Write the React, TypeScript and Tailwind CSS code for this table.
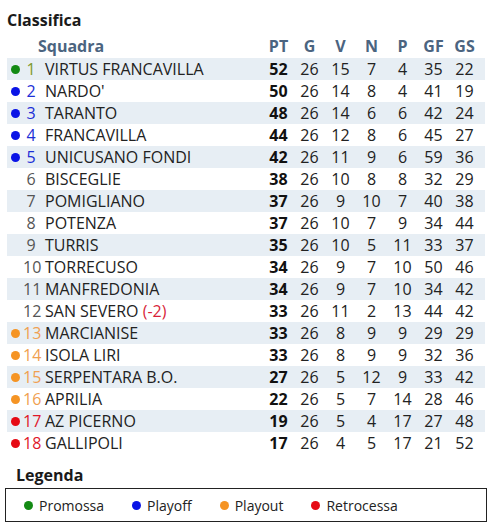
import React from "react";

type Row = {
  pos: number;
  name: string;
  pen?: string;
  zone?: "p" | "o" | "u" | "r";
  pt: number;
  g: number;
  v: number;
  n: number;
  p: number;
  gf: number;
  gs: number;
};

const rows: Row[] = [
  { pos: 1, name: "VIRTUS FRANCAVILLA", zone: "p", pt: 52, g: 26, v: 15, n: 7, p: 4, gf: 35, gs: 22 },
  { pos: 2, name: "NARDO'", zone: "o", pt: 50, g: 26, v: 14, n: 8, p: 4, gf: 41, gs: 19 },
  { pos: 3, name: "TARANTO", zone: "o", pt: 48, g: 26, v: 14, n: 6, p: 6, gf: 42, gs: 24 },
  { pos: 4, name: "FRANCAVILLA", zone: "o", pt: 44, g: 26, v: 12, n: 8, p: 6, gf: 45, gs: 27 },
  { pos: 5, name: "UNICUSANO FONDI", zone: "o", pt: 42, g: 26, v: 11, n: 9, p: 6, gf: 59, gs: 36 },
  { pos: 6, name: "BISCEGLIE", pt: 38, g: 26, v: 10, n: 8, p: 8, gf: 32, gs: 29 },
  { pos: 7, name: "POMIGLIANO", pt: 37, g: 26, v: 9, n: 10, p: 7, gf: 40, gs: 38 },
  { pos: 8, name: "POTENZA", pt: 37, g: 26, v: 10, n: 7, p: 9, gf: 34, gs: 44 },
  { pos: 9, name: "TURRIS", pt: 35, g: 26, v: 10, n: 5, p: 11, gf: 33, gs: 37 },
  { pos: 10, name: "TORRECUSO", pt: 34, g: 26, v: 9, n: 7, p: 10, gf: 50, gs: 46 },
  { pos: 11, name: "MANFREDONIA", pt: 34, g: 26, v: 9, n: 7, p: 10, gf: 34, gs: 42 },
  { pos: 12, name: "SAN SEVERO", pen: "(-2)", pt: 33, g: 26, v: 11, n: 2, p: 13, gf: 44, gs: 42 },
  { pos: 13, name: "MARCIANISE", zone: "u", pt: 33, g: 26, v: 8, n: 9, p: 9, gf: 29, gs: 29 },
  { pos: 14, name: "ISOLA LIRI", zone: "u", pt: 33, g: 26, v: 8, n: 9, p: 9, gf: 32, gs: 36 },
  { pos: 15, name: "SERPENTARA B.O.", zone: "u", pt: 27, g: 26, v: 5, n: 12, p: 9, gf: 33, gs: 42 },
  { pos: 16, name: "APRILIA", zone: "u", pt: 22, g: 26, v: 5, n: 7, p: 14, gf: 28, gs: 46 },
  { pos: 17, name: "AZ PICERNO", zone: "r", pt: 19, g: 26, v: 5, n: 4, p: 17, gf: 27, gs: 48 },
  { pos: 18, name: "GALLIPOLI", zone: "r", pt: 17, g: 26, v: 4, n: 5, p: 17, gf: 21, gs: 52 },
];

const dotClass: Record<string, string> = {
  p: "bg-[#138a13]",
  o: "bg-[#0a14e6]",
  u: "bg-[#f59424]",
  r: "bg-[#e60a14]",
};

const numClass: Record<string, string> = {
  p: "text-[#7f9a2e]",
  o: "text-[#1c2fd6]",
  u: "text-[#f0a050]",
  r: "text-[#e0182a]",
};

const heads = ["PT", "G", "V", "N", "P", "GF", "GS"];

export default function App() {
  return (
    <div
      className="w-[492px] h-[531px] bg-white text-[#222] px-[7px] pt-[8px]"
      style={{ fontFamily: '"Open Sans", "Liberation Sans", sans-serif' }}
    >
      <div className="text-[16px] font-bold leading-[24px] text-[#1a1a1a]">Classifica</div>
      <div className="w-[478px] mt-[2px]">
        <div className="flex h-[24px] items-center text-[16px] font-bold text-[#4b6480]">
          <div className="w-[31px]" />
          <div className="flex-1">Squadra</div>
          {heads.map((h) => (
            <div key={h} className="w-[31px] text-center">
              {h}
            </div>
          ))}
          <div className="w-[5px]" />
        </div>
        {rows.map((r, i) => (
          <div
            key={r.pos}
            className={
              "flex h-[22px] items-center text-[16px] " + (i % 2 === 0 ? "bg-[#e7eef4]" : "bg-white")
            }
          >
            <div className="w-[16px] flex justify-center">
              {r.zone ? <span className={"block w-[9px] h-[9px] rounded-full " + dotClass[r.zone]} /> : null}
            </div>
            <div className={"w-[16px] text-center " + (r.zone ? numClass[r.zone] : "text-[#555]")}>
              {r.pos}
            </div>
            <div className="flex-1 pl-[6px] whitespace-nowrap">
              {r.name}
              {r.pen ? <span className="text-[#d81f3a]"> {r.pen}</span> : null}
            </div>
            <div className="w-[31px] text-center font-bold text-[#111]">{r.pt}</div>
            <div className="w-[31px] text-center">{r.g}</div>
            <div className="w-[31px] text-center">{r.v}</div>
            <div className="w-[31px] text-center">{r.n}</div>
            <div className="w-[31px] text-center">{r.p}</div>
            <div className="w-[31px] text-center">{r.gf}</div>
            <div className="w-[31px] text-center">{r.gs}</div>
            <div className="w-[5px]" />
          </div>
        ))}
      </div>
      <div className="pl-[9px] mt-[10px] text-[16px] font-bold leading-[22px] text-[#1a1a1a]">Legenda</div>
      <div className="-ml-[2px] w-[482px] h-[34px] border-[1.5px] border-[#222] flex items-center pl-[18px] gap-[28px] text-[14px] mt-[2px]">
        {[
          ["bg-[#138a13]", "Promossa"],
          ["bg-[#0a14e6]", "Playoff"],
          ["bg-[#f59424]", "Playout"],
          ["bg-[#e60a14]", "Retrocessa"],
        ].map(([c, t]) => (
          <div key={t} className="flex items-center gap-[6px]">
            <span className={"block w-[9px] h-[9px] rounded-full " + c} />
            <span>{t}</span>
          </div>
        ))}
      </div>
    </div>
  );
}
